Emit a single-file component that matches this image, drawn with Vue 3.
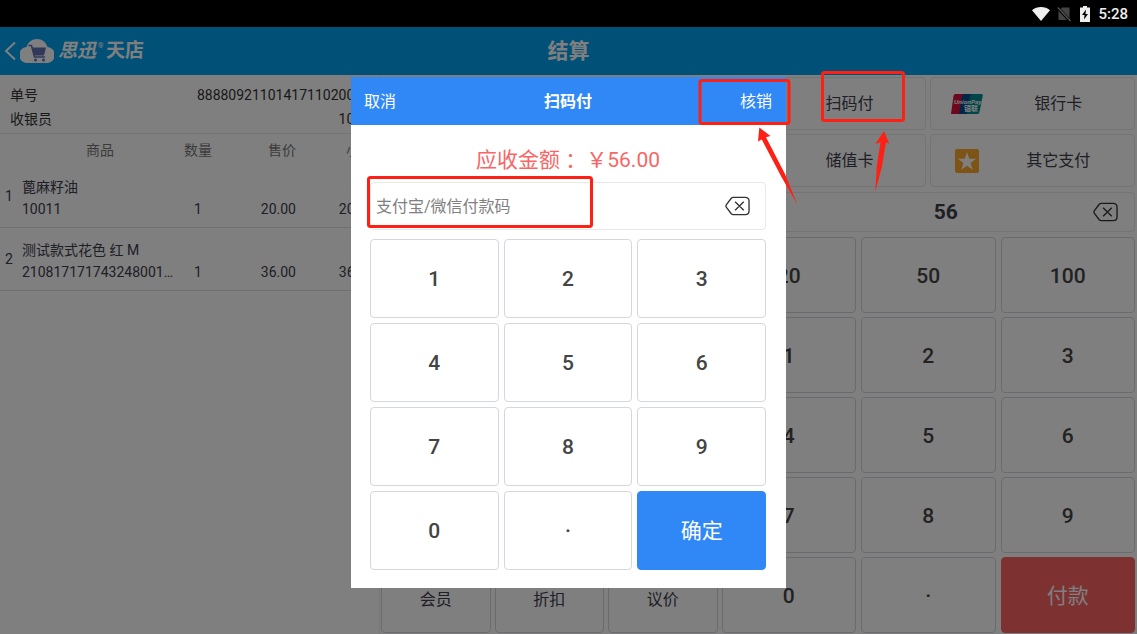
<script setup>
import { ref } from 'vue'

const items = [
  { name: '蓖麻籽油', code: '10011', qty: 1, price: '20.00', total: '20.00' },
  { name: '测试款式花色 红 M', code: '210817171743248001…', qty: 1, price: '36.00', total: '36.00' }
]
const actions = ['会员', '折扣', '议价']
const quickKeys = ['20', '50', '100', '1', '2', '3', '4', '5', '6', '7', '8', '9', '0', '·']
const dialogKeys = ['1', '2', '3', '4', '5', '6', '7', '8', '9', '0', '·']
const amount = ref('56')
const payCode = ref('')
</script>

<template>
  <div class="screen">
    <div class="status">
      <svg class="wifi" viewBox="0 0 18 14"><path d="M0 3.2C5-1 13-1 18 3.2L9 14Z" fill="#eee" /></svg>
      <svg class="sim" viewBox="0 0 14 16"><path d="M5 1.5h7.5V14H1.500V5Z" fill="#444" /><path d="M0 1 13 15" stroke="#000" stroke-width="3" /><path d="M.8 1.500 13.500 15" stroke="#555" stroke-width="1.300" /></svg>
      <svg class="battery" viewBox="0 0 10 16"><path d="M3 0h4v1.500h3V16H0V1.500h3Z" fill="#eee" /><path d="M6 3.500 2 9h2.500L4 13.500 8 8H5.500Z" fill="#000" /></svg>
      <span>5:28</span>
    </div>

    <header class="topbar">
      <button class="back" aria-label="返回">
        <svg viewBox="0 0 12 20"><path d="M11 1.500 2 10l9 8.500" fill="none" stroke="#fff" stroke-width="2" /></svg>
      </button>
      <svg class="cloud" viewBox="0 0 34 24">
        <path d="M8 24a8 8 0 0 1-1.500-16C8 3 12 0 17 0s9 3 10.500 8A8 8 0 0 1 26 24Z" fill="#fff" />
        <path d="M8.500 6.500h3l3 11.500h10.500" fill="none" stroke="#6373b4" stroke-width="1.600" />
        <path d="M11.500 8.500H26l-2 8H14Z" fill="#6373b4" />
        <circle cx="15.500" cy="21" r="1.500" fill="#6373b4" /><circle cx="23.500" cy="21" r="1.500" fill="#6373b4" />
      </svg>
      <span class="brand"><i>思迅</i><sup>®</sup><span>天店</span></span>
      <h1>结算</h1>
    </header>

    <main class="main">
      <section class="order">
        <dl class="info">
          <div><dt>单号</dt><dd>8888092110141711020001</dd></div>
          <div><dt>收银员</dt><dd>1001</dd></div>
        </dl>
        <table class="goods">
          <colgroup><col class="c-no" /><col class="c-name" /><col class="c-qty" /><col class="c-price" /><col class="c-total" /></colgroup>
          <thead>
            <tr><th></th><th class="h-name">商品</th><th>数量</th><th class="h-num">售价</th><th class="h-num">小计</th></tr>
          </thead>
          <tbody v-for="(it, i) in items" :key="it.code">
            <tr class="r-name"><td rowspan="2" class="no">{{ i + 1 }}</td><td colspan="4">{{ it.name }}</td></tr>
            <tr class="r-code">
              <td class="code">{{ it.code }}</td><td class="qty">{{ it.qty }}</td>
              <td class="num">{{ it.price }}</td><td class="num">{{ it.total }}</td>
            </tr>
          </tbody>
        </table>
      </section>

      <section class="checkout">
        <div class="actions"><button v-for="a in actions" :key="a" class="cell">{{ a }}</button></div>
        <div class="pay">
          <div class="methods">
            <button class="cell method">
              <svg viewBox="0 0 32 24"><path d="M2 2h8v8H2zM20 2h8v8h-8zM2 14h8v8H2zM14 2h2v20h-2zM20 14h8v2h-8zM20 20h8v2h-8z" fill="#2f88f5" /></svg>
              <span>扫码付</span>
            </button>
            <button class="cell method">
              <svg viewBox="0 0 32 24">
                <path d="M4 2h11l-4 20H0L2.500 4Q3 2 4 2Z" fill="#d8123c" />
                <path d="M13 2h10l-4 20H8l3-18Q12 2 13 2Z" fill="#074c91" />
                <path d="M21 2h9.500q1.500 0 1.300 1.500L28.500 20q-.5 2-2 2H16l3-18Q20 2 21 2Z" fill="#008c91" />
                <text x="3" y="12" class="up-en">UnionPay</text><text x="13" y="19" class="up-cn">银联</text>
              </svg>
              <span>银行卡</span>
            </button>
            <button class="cell method">
              <svg viewBox="0 0 32 24"><rect x="3" y="2" width="26" height="20" rx="3" fill="#2f88f5" /><path d="M3 7h26v4H3z" fill="#fff" /></svg>
              <span>储值卡</span>
            </button>
            <button class="cell method">
              <svg viewBox="0 0 32 24"><rect x="4" width="24" height="24" rx="2" fill="#fba92d" /><path d="m16 3 2.200 6.700h7L19.600 14l2.100 6.800L16 16.700l-5.700 4.100L12.400 14 6.800 9.700h7Z" fill="#fff" /></svg>
              <span>其它支付</span>
            </button>
          </div>
          <div class="cell amount">
            <input v-model="amount" aria-label="付款金额" />
            <button class="del" aria-label="删除">
              <svg viewBox="0 0 26 20"><path d="M8.500 1H21q4 0 4 4v10q0 4-4 4H8.500q-1 0-2-1L1.500 11.500q-1-1.500 0-3L6.500 2q1-1 2-1ZM10.500 5.500l9 9M19.500 5.500l-9 9" /></svg>
            </button>
          </div>
          <div class="keys">
            <button v-for="k in quickKeys" :key="k" class="cell key">{{ k }}</button>
            <button class="cell key submit">付款</button>
          </div>
        </div>
      </section>
    </main>

    <div class="mask">
      <div class="dialog" role="dialog" aria-labelledby="dialog-title">
        <div class="dialog-head">
          <button>取消</button><h2 id="dialog-title">扫码付</h2><button>核销</button>
        </div>
        <div class="dialog-body">
          <p class="due">应收金额 ：￥<span>56.00</span></p>
          <div class="cell code-box">
            <input v-model="payCode" placeholder="支付宝/微信付款码" aria-label="支付宝/微信付款码" />
            <button class="del" aria-label="删除">
              <svg viewBox="0 0 26 20"><path d="M8.500 1H21q4 0 4 4v10q0 4-4 4H8.500q-1 0-2-1L1.500 11.500q-1-1.500 0-3L6.500 2q1-1 2-1ZM10.500 5.500l9 9M19.500 5.500l-9 9" /></svg>
            </button>
          </div>
          <div class="dialog-keys">
            <button v-for="k in dialogKeys" :key="k" class="cell key">{{ k }}</button>
            <button class="cell key confirm">确定</button>
          </div>
        </div>
      </div>
    </div>

    <svg class="marks" viewBox="0 0 1137 634" preserveAspectRatio="none">
      <g fill="none" stroke="#ff2015" stroke-width="3">
        <rect x="368.500" y="177.500" width="223" height="49" rx="2" />
        <rect x="700" y="80.500" width="89" height="43" rx="2" />
        <rect x="822.500" y="72.500" width="81" height="48" rx="2" />
      </g>
      <g fill="#ff2015">
        <path d="M759.300 127.500 770.500 136 766 137.200 785 174 797.300 204.500 781.500 177 761.800 139.500 758 141.500Z" />
        <path d="M884 131 889.200 143.800 886 142.200 882 166 875.300 192 876.800 166 880.500 142.200 875.300 144Z" />
      </g>
    </svg>
  </div>
</template>

<style>
html, body { background: #000; }
</style>

<style scoped>
* { box-sizing: border-box; margin: 0; padding: 0; }
.screen {
  position: relative;
  display: flex;
  flex-direction: column;
  min-height: 100vh;
  font: 14px/22px Roboto, "Noto Sans CJK SC", sans-serif;
  color: #3c404c;
  background: #fff;
}
button, input { font: inherit; color: inherit; border: 0; background: none; }
svg { display: block; flex: none; }
.status {
  display: flex;
  align-items: center;
  justify-content: flex-end;
  height: 27px;
  padding-right: 9px;
  background: #000;
  color: #eee;
  font-size: 15px;
  font-weight: 500;
}
.wifi { width: 18px; height: 14px; margin-right: 7px; }
.sim { width: 14px; height: 16px; margin-right: 9px; }
.battery { width: 10px; height: 16px; margin-right: 8px; }
.topbar {
  position: relative;
  display: flex;
  align-items: center;
  height: 48px;
  padding-left: 4px;
  background: #00a0ee;
  color: #fff;
}
.back svg { width: 12px; height: 20px; }
.cloud { width: 34px; height: 24px; margin: 0 4px; }
.brand { display: flex; align-items: center; font-size: 19px; font-weight: 700; }
.brand sup { align-self: flex-start; width: 10px; padding-left: 2px; font-size: 7px; line-height: 12px; font-weight: 400; }
.topbar h1 { position: absolute; inset: 0; text-align: center; font-size: 21px; line-height: 48px; font-weight: 700; pointer-events: none; }
.main { flex: 1; display: grid; grid-template-columns: 1fr 2fr; }
.order { min-width: 0; }
.info { padding: 8px 9px 2px 10px; border-bottom: 1px solid #e8e8e8; line-height: 24px; color: #333; }
.info div { display: flex; justify-content: space-between; }
.goods { width: 100%; table-layout: fixed; border-collapse: collapse; }
.c-no { width: 22px; }
.c-qty { width: 50px; }
.c-price, .c-total { width: 78px; }
.goods th { height: 31px; font-weight: 400; color: #777; }
.goods .h-name { padding-left: 5px; }
.goods .h-num { padding-right: 5px; text-align: right; }
.goods tbody { border-bottom: 1px solid #dedede; }
.r-name td { padding-top: 11px; }
.r-code td { padding-bottom: 7px; }
.goods .no { padding: 0 0 0 5px; }
.code { white-space: nowrap; }
.qty { text-align: center; }
.goods .num { padding-right: 5px; text-align: right; }
.checkout { display: grid; grid-template-columns: 337fr 414fr; gap: 4px; padding: 2px 2px 1px 1px; border-left: 1px solid #eee; }
.cell {
  min-width: 0;
  border: 1px solid #d4d7de;
  border-radius: 4px;
  background: #fff;
  text-align: center;
}
.actions { align-self: end; display: grid; grid-template-columns: repeat(3, 1fr); gap: 4px; }
.actions .cell { height: 76px; font-size: 16px; padding-top: 9px; }
.pay { display: flex; flex-direction: column; gap: 5px; }
.methods { display: grid; grid-template-columns: 1fr 1fr; gap: 4px; }
.method { display: flex; align-items: center; height: 53px; padding: 0 19px 0 20px; font-size: 16px; border-color: #e8e8e8; }
.method svg { width: 32px; height: 24px; }
.method span { flex: 1; margin: 0 0 0 18px; }
.up-en { font: italic 700 6px "Liberation Sans", sans-serif; fill: #fff; }
.up-cn { font: 700 7px "Noto Sans CJK SC", sans-serif; fill: #fff; }
.amount, .code-box { display: flex; align-items: center; border-color: #e8e8e8; }
.amount { height: 40px; padding: 0 16px 0 76px; }
.amount input { flex: 1; min-width: 0; text-align: center; font-size: 21px; font-weight: 700; }
.del svg { width: 25px; height: 20px; fill: none; stroke: #333; stroke-width: 1.400; }
.keys { flex: 1; display: grid; grid-template-columns: repeat(3, 1fr); grid-auto-rows: minmax(60px, 1fr); gap: 4px 5px; }
.key { padding-top: 1px; font-size: 21px; font-weight: 500; color: #444; }
.submit { padding-top: 2px; background: #fa6262; border-color: #fa6262; color: #fff; font-weight: 400; }
.mask {
  position: absolute;
  inset: 27px 0 0;
  display: flex;
  align-items: center;
  justify-content: center;
  padding-top: 4px;
  background: rgba(0, 0, 0, 0.5);
}
.dialog { width: 435px; background: #fff; }
.dialog-head { display: flex; align-items: center; justify-content: space-between; height: 48px; padding: 1px 14px 0 13px; background: #2f88f5; color: #fff; font-size: 16px; }
.dialog-head h2 { font-size: 16px; font-weight: 700; }
.dialog-body { padding: 21px 20px 18px 19px; }
.due { margin-bottom: 7px; text-align: center; font-size: 21px; line-height: 29px; color: #fa6565; }
.code-box { height: 48px; padding: 0 15px 0 5px; margin-bottom: 9px; }
.code-box input { flex: 1; min-width: 0; font-size: 16px; line-height: 24px; padding-top: 2px; outline: 0; }
.code-box input::placeholder { color: #808080; opacity: 1; }
.dialog-keys { display: grid; grid-template-columns: repeat(3, 1fr); grid-auto-rows: 79px; gap: 5px; }
.confirm { background: #2f88f5; border-color: #2f88f5; color: #fff; font-weight: 400; }
.marks { position: absolute; inset: 0; width: 100%; height: 100%; pointer-events: none; }
</style>
